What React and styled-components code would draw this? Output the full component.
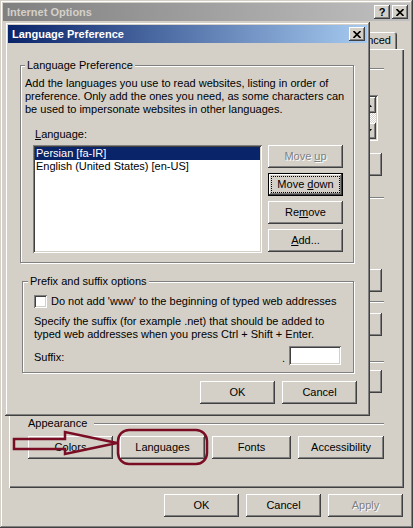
import React from "react";
import styled, { createGlobalStyle, css } from "styled-components";

const FACE = "#d4d0c8";
const SHADOW = "#808080";
const DARK = "#404040";
const MAROON = "#7a0c24";
const FONT = `"Liberation Sans", Arial, sans-serif`;

const GlobalStyle = createGlobalStyle`
  html, body {
    margin: 0;
    padding: 0;
    background: ${FACE};
    overflow: hidden;
  }
  body {
    font-family: ${FONT};
    font-size: 11px;
    line-height: 13px;
    color: #000;
  }
`;

// win2000 bevels
const frameRaised = css`
  box-shadow: inset -1px -1px ${DARK}, inset 1px 1px ${FACE},
    inset -2px -2px ${SHADOW}, inset 2px 2px #fff;
`;
const buttonRaised = css`
  box-shadow: inset -1px -1px ${DARK}, inset 1px 1px #fff,
    inset -2px -2px ${SHADOW}, inset 2px 2px ${FACE};
`;
const sunken = css`
  box-shadow: inset 1px 1px ${SHADOW}, inset -1px -1px #fff,
    inset 2px 2px ${DARK}, inset -2px -2px ${FACE};
`;

const Window = styled.div`
  position: relative;
  width: 413px;
  height: 528px;
  box-sizing: border-box;
  padding: 3px;
  background: ${FACE};
  display: flex;
  flex-direction: column;
  ${frameRaised}
`;

const TitleBar = styled.div`
  height: 18px;
  flex-shrink: 0;
  display: flex;
  align-items: center;
  padding: 0 2px 0 4px;
  background: linear-gradient(to right, ${(p) => p.$from}, ${(p) => p.$to});
  color: ${(p) => p.$color};
  font-weight: bold;
  font-size: 11px;
`;

const TitleText = styled.div`
  flex: 1;
  white-space: nowrap;
`;

const CaptionButton = styled.div`
  width: 16px;
  height: 14px;
  box-sizing: border-box;
  margin-left: ${(p) => (p.$gap ? 2 : 0)}px;
  background: ${FACE};
  display: flex;
  align-items: center;
  justify-content: center;
  color: #000;
  font-weight: bold;
  font-size: 11px;
  line-height: 11px;
  ${buttonRaised}
`;

const CloseGlyph = () => (
  <svg width="8" height="7" viewBox="0 0 8 7">
    <path d="M0.5 0 L7.5 7 M7.5 0 L0.5 7" stroke="#000" strokeWidth="1.6" />
  </svg>
);

const WindowBody = styled.div`
  flex: 1;
  display: flex;
  flex-direction: column;
  padding: 9px 6px 0 6px;
`;

const TabRow = styled.div`
  height: 19px;
  display: flex;
  justify-content: flex-end;
  align-items: flex-end;
  padding-right: 7px;
`;

const Tab = styled.div`
  flex-shrink: 0;
  height: 17px;
  line-height: 17px;
  padding: 0 6px;
  background: ${FACE};
  border-radius: 3px 3px 0 0;
  white-space: nowrap;
  box-shadow: inset 1px 1px #fff, inset -1px 0 ${DARK}, inset -2px 0 ${SHADOW};
`;

const TabPanel = styled.div`
  height: 439px;
  box-sizing: border-box;
  padding: 13px 20px 0 19px;
  background: ${FACE};
  display: flex;
  flex-direction: column;
  box-shadow: inset 1px 1px #fff, inset -1px -1px ${DARK},
    inset -2px -2px ${SHADOW};
`;

const SectionHeader = styled.div`
  display: flex;
  align-items: center;
  height: 13px;
  white-space: nowrap;
`;

const HeaderRule = styled.div`
  flex: 1;
  border-top: 1px solid ${SHADOW};
  border-bottom: 1px solid #fff;
  margin-left: 7px;
`;

const SectionBody = styled.div`
  height: ${(p) => p.$h}px;
  display: flex;
  flex-direction: column;
`;

const AddressBox = styled.div`
  margin: 20px 6px 0 40px;
  height: 46px;
  box-sizing: border-box;
  padding: 2px;
  background: #fff;
  display: flex;
  justify-content: flex-end;
  ${sunken}
`;

const ScrollBar = styled.div`
  width: 16px;
  display: flex;
  flex-direction: column;
`;

const ScrollArrow = styled.div`
  height: 16px;
  background: ${FACE};
  display: flex;
  align-items: center;
  justify-content: center;
  ${buttonRaised}
`;

const ScrollTrack = styled.div`
  flex: 1;
  background: repeating-conic-gradient(#fff 0 25%, ${FACE} 0 50%) 0 0 / 2px 2px;
`;

const Arrow = ({ up }) => (
  <svg width="7" height="4" viewBox="0 0 7 4">
    <path d={up ? "M0 4 L3.5 0 L7 4 Z" : "M0 0 L3.5 4 L7 0 Z"} fill="#000" />
  </svg>
);

const ButtonRow = styled.div`
  display: flex;
  justify-content: ${(p) => p.$justify || "flex-end"};
  gap: 7px;
  margin: ${(p) => p.$top || 0}px ${(p) => p.$right || 0}px 0 0;
`;

const Button = styled.div`
  flex-shrink: 0;
  width: ${(p) => p.$w || 75}px;
  height: 23px;
  box-sizing: border-box;
  background: ${FACE};
  text-align: center;
  line-height: 23px;
  white-space: nowrap;
  ${buttonRaised}
  ${(p) =>
    p.$disabled &&
    css`
      color: ${SHADOW};
      text-shadow: 1px 1px #fff;
    `}
  ${(p) =>
    p.$default &&
    css`
      box-shadow: inset 0 0 0 1px #000, inset -2px -2px ${DARK},
        inset 2px 2px #fff, inset -3px -3px ${SHADOW}, inset 3px 3px ${FACE};
      outline: 1px dotted #000;
      outline-offset: -4px;
    `}
`;

const Dialog = styled.div`
  position: absolute;
  left: 5px;
  top: 22px;
  width: 365px;
  height: 394px;
  box-sizing: border-box;
  padding: 3px;
  background: ${FACE};
  display: flex;
  flex-direction: column;
  ${frameRaised}
`;

const DialogBody = styled.div`
  display: flex;
  flex-direction: column;
  padding: 0 13px 0 12px;
`;

const Group = styled.fieldset`
  margin: ${(p) => p.$top}px 0 0 ${(p) => p.$left || 0}px;
  padding: 0;
  border: 1px solid ${SHADOW};
  box-shadow: inset 1px 1px #fff, 1px 1px #fff;
  min-width: 0;
`;

const GroupLabel = styled.legend`
  margin-left: ${(p) => p.$offset}px;
  padding: 0 2px;
  line-height: 13px;
  background: ${FACE};
`;

const GroupContent = styled.div`
  padding: ${(p) => p.$pad};
  display: flex;
  flex-direction: column;
`;

const Description = styled.div`
  white-space: nowrap;
  margin-top: ${(p) => p.$top || 0}px;
`;

const FieldLabel = styled.div`
  margin: 12px 0 0 10px;
`;

const ListRow = styled.div`
  display: flex;
  gap: 6px;
  margin: 4px 0 0 8px;
`;

const ListBox = styled.div`
  width: 229px;
  height: 108px;
  box-sizing: border-box;
  padding: 2px;
  background: #fff;
  ${sunken}
`;

const ListItem = styled.div`
  height: 13px;
  line-height: 13px;
  padding-left: 1px;
  white-space: nowrap;
  ${(p) =>
    p.$selected &&
    css`
      background: #0a246a;
      color: #fff;
    `}
`;

const ButtonColumn = styled.div`
  display: flex;
  flex-direction: column;
  gap: 5px;
`;

const CheckRow = styled.div`
  display: flex;
  align-items: center;
  gap: 4px;
  height: 13px;
  white-space: nowrap;
`;

const CheckBox = styled.div`
  width: 13px;
  height: 13px;
  box-sizing: border-box;
  background: #fff;
  ${sunken}
`;

const SuffixRow = styled.div`
  display: flex;
  align-items: flex-end;
  margin-top: 5px;
`;

const SuffixLabel = styled.div`
  flex: 1;
  padding-bottom: 1px;
`;

const Dot = styled.div`
  padding: 0 4px 0 0;
`;

const TextInput = styled.div`
  width: 52px;
  height: 19px;
  background: #fff;
  ${sunken}
`;

const Annotation = styled.svg`
  position: absolute;
  left: 0;
  top: 420px;
  pointer-events: none;
`;

export default function App() {
  return (
    <>
      <GlobalStyle />
      <Window>
        <TitleBar $from="#808080" $to="#c0c0c0" $color={FACE}>
          <TitleText>Internet Options</TitleText>
          <CaptionButton>?</CaptionButton>
          <CaptionButton $gap>
            <CloseGlyph />
          </CaptionButton>
        </TitleBar>

        <WindowBody>
          <TabRow>
            <Tab>Advanced</Tab>
          </TabRow>

          {/* General tab: mostly hidden behind the dialog, only right edges show */}
          <TabPanel>
            <SectionHeader>
              <HeaderRule />
            </SectionHeader>
            <SectionBody $h={116}>
              <AddressBox>
                <ScrollBar>
                  <ScrollArrow>
                    <Arrow up />
                  </ScrollArrow>
                  <ScrollTrack />
                  <ScrollArrow>
                    <Arrow />
                  </ScrollArrow>
                </ScrollBar>
              </AddressBox>
              <ButtonRow $top={12} $right={2}>
                <Button />
              </ButtonRow>
            </SectionBody>

            <SectionHeader>
              <HeaderRule />
            </SectionHeader>
            <SectionBody $h={91}>
              <ButtonRow $top={65} $right={2}>
                <Button />
              </ButtonRow>
            </SectionBody>

            <SectionHeader>
              <HeaderRule />
            </SectionHeader>
            <SectionBody $h={47}>
              <ButtonRow $top={5} $right={2}>
                <Button />
              </ButtonRow>
            </SectionBody>

            <SectionHeader>
              <HeaderRule />
            </SectionHeader>
            <SectionBody $h={49}>
              <ButtonRow $top={2} $right={2}>
                <Button />
              </ButtonRow>
            </SectionBody>

            <SectionHeader>
              Appearance
              <HeaderRule />
            </SectionHeader>
            <ButtonRow $top={6} $justify="flex-start">
              <Button $w={85}>Colors</Button>
              <Button $w={85}>Languages</Button>
              <Button $w={79}>Fonts</Button>
              <Button $w={86}>Accessibility</Button>
            </ButtonRow>
          </TabPanel>

          <ButtonRow $top={6} $right={1}>
            <Button>OK</Button>
            <Button>Cancel</Button>
            <Button $disabled>Apply</Button>
          </ButtonRow>
        </WindowBody>

        <Dialog>
          <TitleBar $from="#0a246a" $to="#a6caf0" $color="#fff">
            <TitleText>Language Preference</TitleText>
            <CaptionButton>
              <CloseGlyph />
            </CaptionButton>
          </TitleBar>
          <DialogBody>
            <Group $top={16}>
              <GroupLabel $offset={4}>Language Preference</GroupLabel>
              <GroupContent $pad="5px 10px 9px 4px">
                <Description>
                  Add the languages you use to read websites, listing in order of
                  <br />
                  preference. Only add the ones you need, as some characters can
                  <br />
                  be used to impersonate websites in other languages.
                </Description>
                <FieldLabel>
                  <u>L</u>anguage:
                </FieldLabel>
                <ListRow>
                  <ListBox>
                    <ListItem $selected>Persian [fa-IR]</ListItem>
                    <ListItem>English (United States) [en-US]</ListItem>
                  </ListBox>
                  <ButtonColumn>
                    <Button $disabled>
                      Move <u>u</u>p
                    </Button>
                    <Button $default>
                      Move <u>d</u>own
                    </Button>
                    <Button>
                      Re<u>m</u>ove
                    </Button>
                    <Button>
                      <u>A</u>dd...
                    </Button>
                  </ButtonColumn>
                </ListRow>
              </GroupContent>
            </Group>

            <Group $top={12} $left={2}>
              <GroupLabel $offset={5}>Prefix and suffix options</GroupLabel>
              <GroupContent $pad="7px 12px 7px 11px">
                <CheckRow>
                  <CheckBox />
                  Do not add 'www' to the beginning of typed web addresses
                </CheckRow>
                <Description $top={7}>
                  Specify the suffix (for example .net) that should be added to
                  <br />
                  typed web addresses when you press Ctrl + Shift + Enter.
                </Description>
                <SuffixRow>
                  <SuffixLabel>Suffix:</SuffixLabel>
                  <Dot>.</Dot>
                  <TextInput />
                </SuffixRow>
              </GroupContent>
            </Group>

            <ButtonRow $top={8} $right={-3}>
              <Button>OK</Button>
              <Button>Cancel</Button>
            </ButtonRow>
          </DialogBody>
        </Dialog>

        <Annotation width="220" height="50" viewBox="0 420 220 50">
          <path
            d="M14 439 H65 V432 L117 443 L65 454 V449 H14 Z"
            fill="none"
            stroke={MAROON}
            strokeWidth="2.5"
          />
          <rect
            x="118"
            y="430"
            width="89"
            height="34"
            rx="11"
            fill="none"
            stroke={MAROON}
            strokeWidth="2.5"
          />
        </Annotation>
      </Window>
    </>
  );
}
